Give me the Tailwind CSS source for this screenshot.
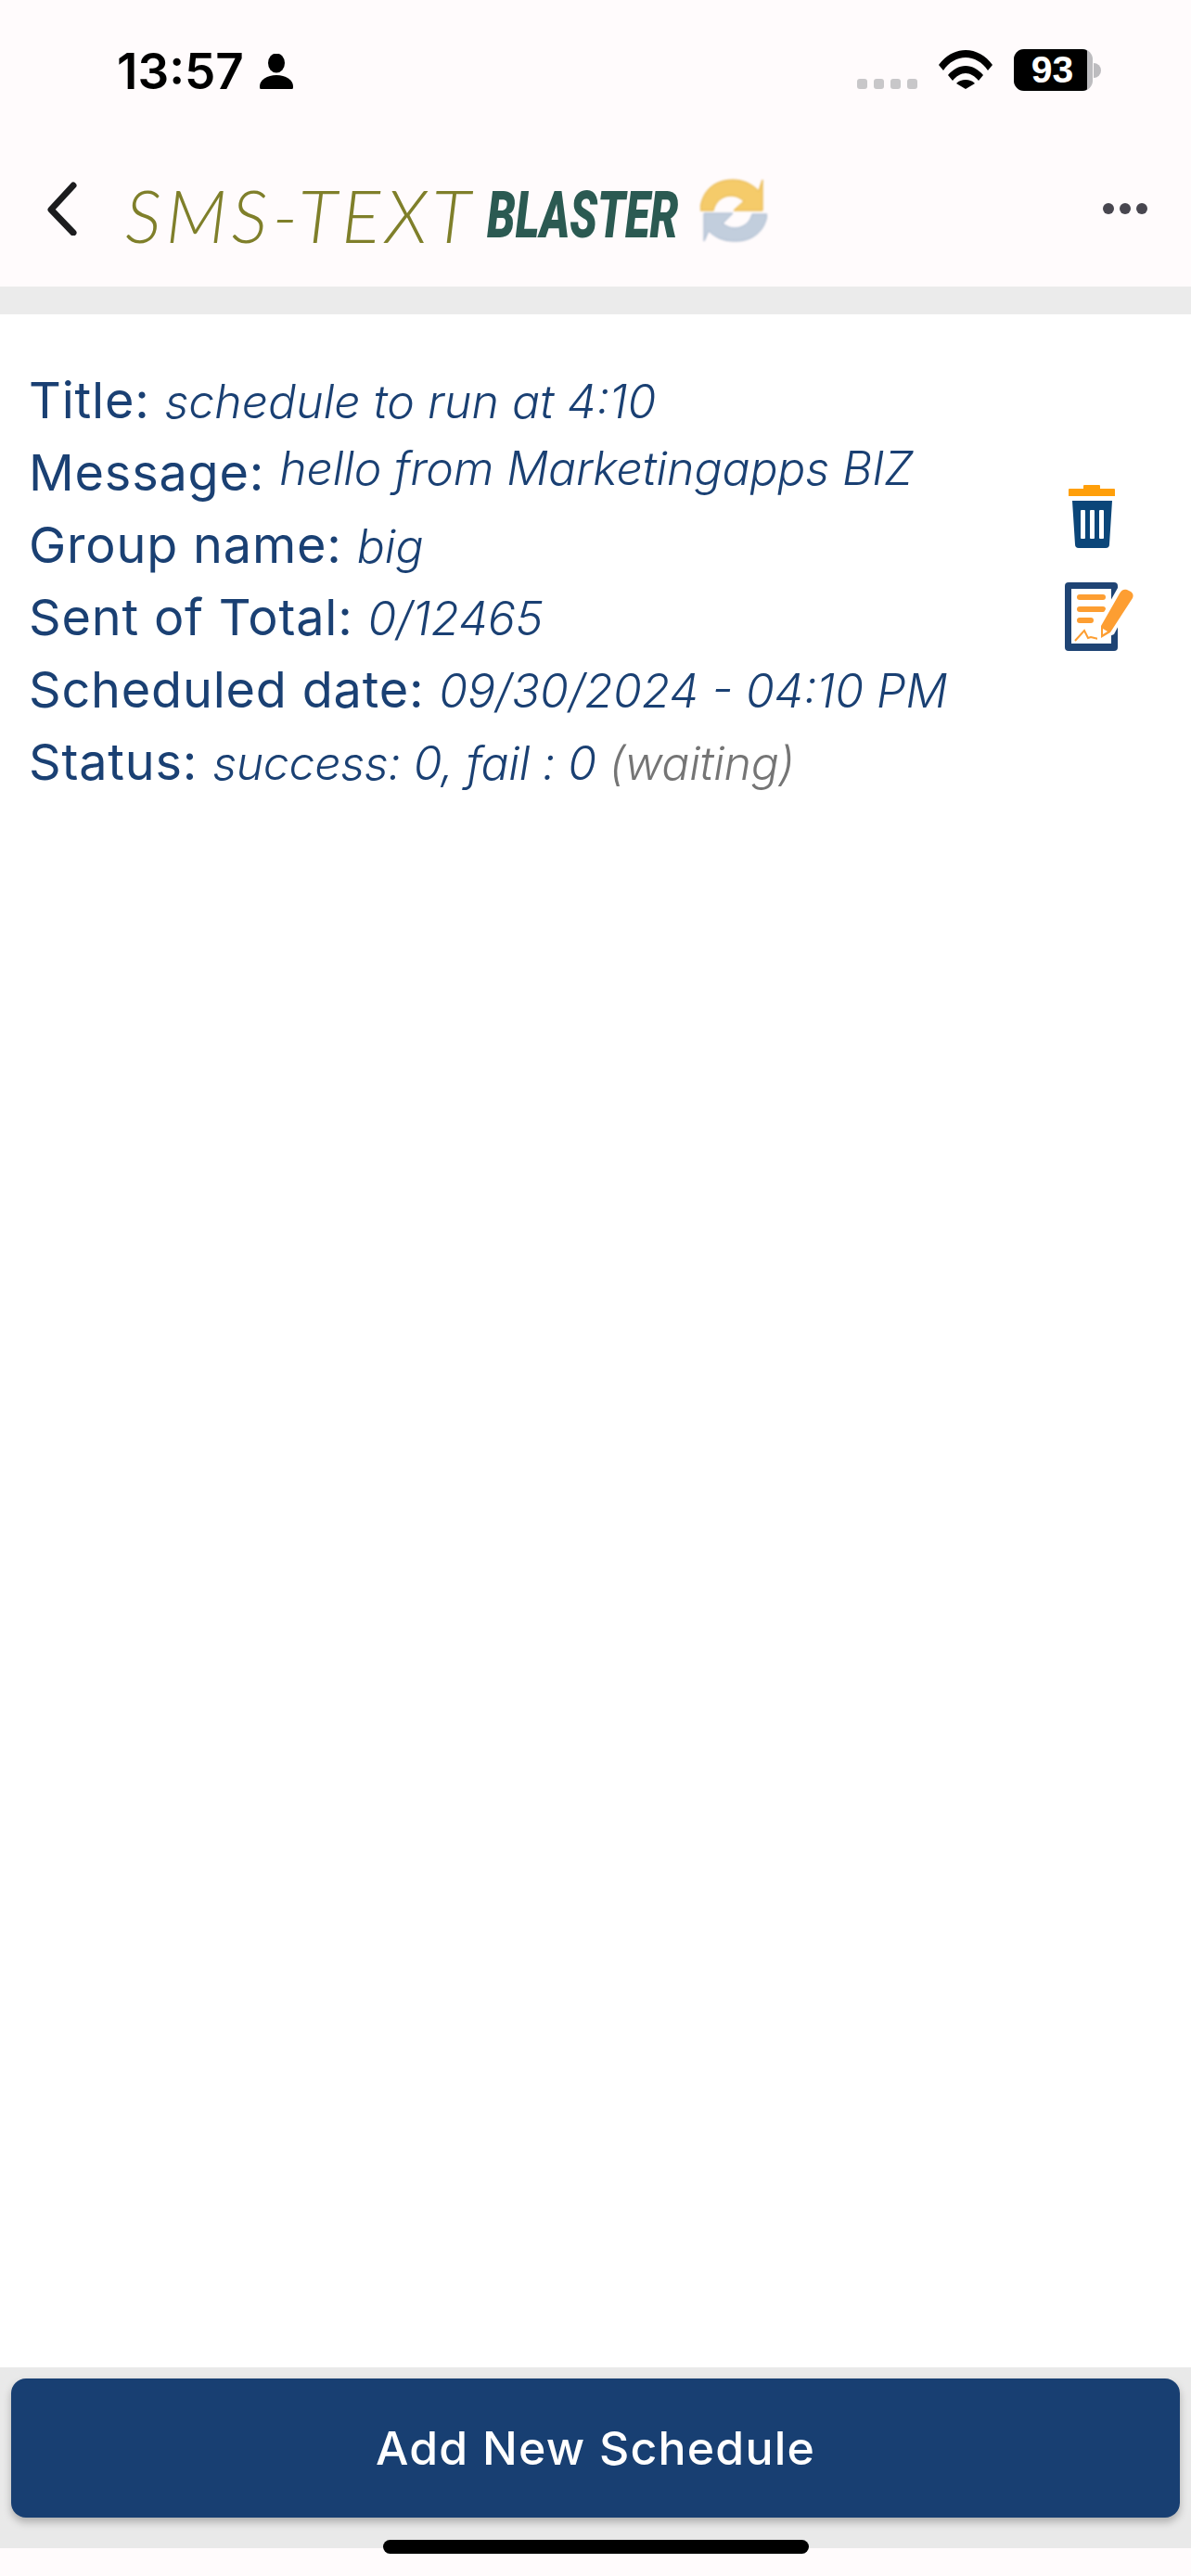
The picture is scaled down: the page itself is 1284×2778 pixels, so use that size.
<!DOCTYPE html>
<html lang="en">
<head>
    <meta charset="UTF-8">
    <meta name="viewport" content="width=device-width, initial-scale=1.0">
    <title>SMS-Text Blaster</title>
    <script src="https://cdn.jsdelivr.net/npm/@tailwindcss/browser@4"></script>
</head>
<body class="relative flex flex-col h-[2778px] bg-[#fffbfc] font-[Inter,sans-serif] overflow-hidden">

    <!-- status bar -->
    <div class="flex items-start h-[135px] pt-[50px] pl-[126px] pr-[97px]">
        <span class="w-[139px] text-[53px] leading-[54px] font-semibold text-black">13:57</span>
        <svg class="ml-[15px] mt-[8px]" width="36" height="38" viewBox="0 0 36 38" fill="#000">
            <ellipse cx="18" cy="10" rx="9" ry="10.5"/>
            <path d="M1 38c-1 0-1-2-1-3 0-7 8-12 18-12s18 5 18 12c0 1 0 3-1 3z"/>
        </svg>
        <div class="flex gap-[7px] ml-auto mt-[35px]">
            <span class="w-[11px] h-[11px] rounded-[3px] bg-[#c8c7c9]"></span>
            <span class="w-[11px] h-[11px] rounded-[3px] bg-[#c8c7c9]"></span>
            <span class="w-[11px] h-[11px] rounded-[3px] bg-[#c8c7c9]"></span>
            <span class="w-[11px] h-[11px] rounded-[3px] bg-[#c8c7c9]"></span>
        </div>
        <svg class="ml-[23px] mt-[4px]" width="58" height="42" viewBox="0 0 58 42" fill="#000">
            <path d="M0 16C7 6 18 0 29 0s22 6 29 16l-5 6C47 13 38 8 29 8S11 13 5 22z"/>
            <path d="M10 27c5-6 12-10 19-10s14 4 19 10l-5 6c-4-5-9-8-14-8s-10 3-14 8z"/>
            <path d="M19 36c3-3 6-4 10-4s7 1 10 4l-10 6z"/>
        </svg>
        <div class="flex items-center ml-[23px] mt-[3px]">
            <div class="flex w-[85px] h-[45px] rounded-[11px] overflow-hidden bg-[#bdbcbf]">
                <div class="flex items-center justify-center w-[79px] h-full bg-black rounded-r-[3px] text-white font-['Liberation_Sans'] font-bold text-[41px] leading-none pl-[4px]">93</div>
            </div>
            <div class="w-[8px] h-[16px] ml-[1px] rounded-r-full bg-[#bdbcbf]"></div>
        </div>
    </div>

    <!-- nav -->
    <div class="flex items-center h-[174px] pl-[50px] pr-[47px] pt-[6px]">
        <svg width="34" height="58" viewBox="0 0 34 58" fill="none" stroke="#1c1c1e" stroke-width="7" stroke-linecap="round" stroke-linejoin="round">
            <path d="M29 4 5 30l24 25"/>
        </svg>
        <div class="flex items-center ml-[51px] mt-[14px] whitespace-nowrap">
            <span class="inline-block w-[375px] text-[78px] leading-[70px] tracking-[5px] font-['Lato'] font-light italic text-[#7f7f2a]">SMS-TEXT</span>
            <span class="inline-block w-[208px] ml-[15px] text-[70px] leading-[70px] font-['Roboto'] font-black italic text-[#2b5a52] origin-left scale-x-[.7]">BLASTER</span>
        </div>
        <svg class="ml-[22px] blur-[1px]" width="72" height="72" viewBox="0 0 72 72" fill="none">
            <path d="M0 38C1 18 14 5 35 5c11 0 20 4 28 12l4-12v33H36l11-10c-4-4-9-6-14-6-10 0-17 7-19 16z" fill="#f5cb6a" stroke="#e3ae3b" stroke-width="1"/>
            <path d="M72 42C70 60 56 72 36 71c-11 0-20-4-27-11l-5 11V41h31L24 52c4 3 8 5 13 5 10 0 17-7 19-15z" fill="#c2cedd" stroke="#a3b4ca" stroke-width="1"/>
        </svg>
        <div class="flex gap-[6px] ml-auto">
            <span class="w-[12px] h-[12px] rounded-full bg-[#48464f]"></span>
            <span class="w-[12px] h-[12px] rounded-full bg-[#48464f]"></span>
            <span class="w-[12px] h-[12px] rounded-full bg-[#48464f]"></span>
        </div>
    </div>
    <div class="h-[30px] bg-[#ebebeb]"></div>

    <!-- schedule row -->
    <div class="flex flex-1 justify-between bg-white pl-[31px] pr-[61px]">
        <div class="pt-[54px] text-[54px] leading-[78px] tracking-[.8px] text-[#1a4073] whitespace-nowrap">
            <p>Title: <span class="text-[50px] leading-none font-light italic tracking-normal">schedule to run at 4:10</span></p>
            <p>Message: <span class="text-[50px] leading-none font-light italic tracking-[-.15px] align-[6px]">hello from Marketingapps BIZ</span></p>
            <p>Group name: <span class="text-[50px] leading-none font-light italic tracking-normal">big</span></p>
            <p>Sent of Total: <span class="text-[50px] leading-none font-light italic tracking-normal">0/12465</span></p>
            <p>Scheduled date: <span class="text-[50px] leading-none font-light italic tracking-normal">09/30/2024 - 04:10 PM</span></p>
            <p>Status: <span class="text-[50px] leading-none font-light italic tracking-[-.3px]">success: 0, fail : 0 <span class="text-[#757575]">(waiting)</span></span></p>
        </div>
        <div class="flex flex-col items-start gap-[37px] pt-[184px]">
            <svg class="ml-[4px]" width="50" height="68" viewBox="0 0 50 68">
                <path d="M17 0h16a1 1 0 0 1 1 1v3h15a1 1 0 0 1 1 1v7H0V5a1 1 0 0 1 1-1h15V1a1 1 0 0 1 1-1z" fill="#ff9f0a"/>
                <path d="M4 17h43l-3 47a4 4 0 0 1-4 4H11a4 4 0 0 1-4-4z" fill="#0b4679"/>
                <rect x="13" y="27" width="5" height="31" rx="1" fill="#fff"/>
                <rect x="23" y="27" width="5" height="31" rx="1" fill="#fff"/>
                <rect x="33" y="27" width="5" height="31" rx="1" fill="#fff"/>
            </svg>
            <svg width="75" height="75" viewBox="0 0 75 75">
                <rect width="57" height="74" rx="4" fill="#1f4474"/>
                <rect x="7" y="7" width="43" height="59" fill="#fff"/>
                <rect x="13" y="13" width="31" height="6" rx="3" fill="#fd9e32"/>
                <rect x="13" y="26" width="31" height="6" rx="3" fill="#fd9e32"/>
                <rect x="13" y="38" width="18" height="6" rx="3" fill="#fd9e32"/>
                <path d="M11 63 21 52l4 8 3-1 8 2" fill="none" stroke="#fd9e32" stroke-width="2"/>
                <path d="M35 64V45L57 6l18 8-22 42z" fill="#fff"/>
                <path d="M39 60V47L59 12c2-4 5-5 8-4l4 2c3 2 3 5 2 7L49 54z" fill="#fd9e32"/>
                <path d="M41 50l5 3-5 3z" fill="#fff"/>
            </svg>
        </div>
    </div>

    <!-- bottom bar -->
    <div class="h-[195px] bg-[#e9e9e9] px-[12px] pt-[12px]">
        <button class="w-full h-[150px] rounded-[16px] bg-[#183f72] text-white text-[50px] font-medium tracking-[1.2px] shadow-[0_5px_8px_rgba(0,0,0,0.25)]">Add New Schedule</button>
    </div>
    <div class="h-[30px]"></div>
    <div class="absolute left-[413px] top-[2739px] w-[459px] h-[15px] rounded-full bg-black"></div>
</body>
</html>
